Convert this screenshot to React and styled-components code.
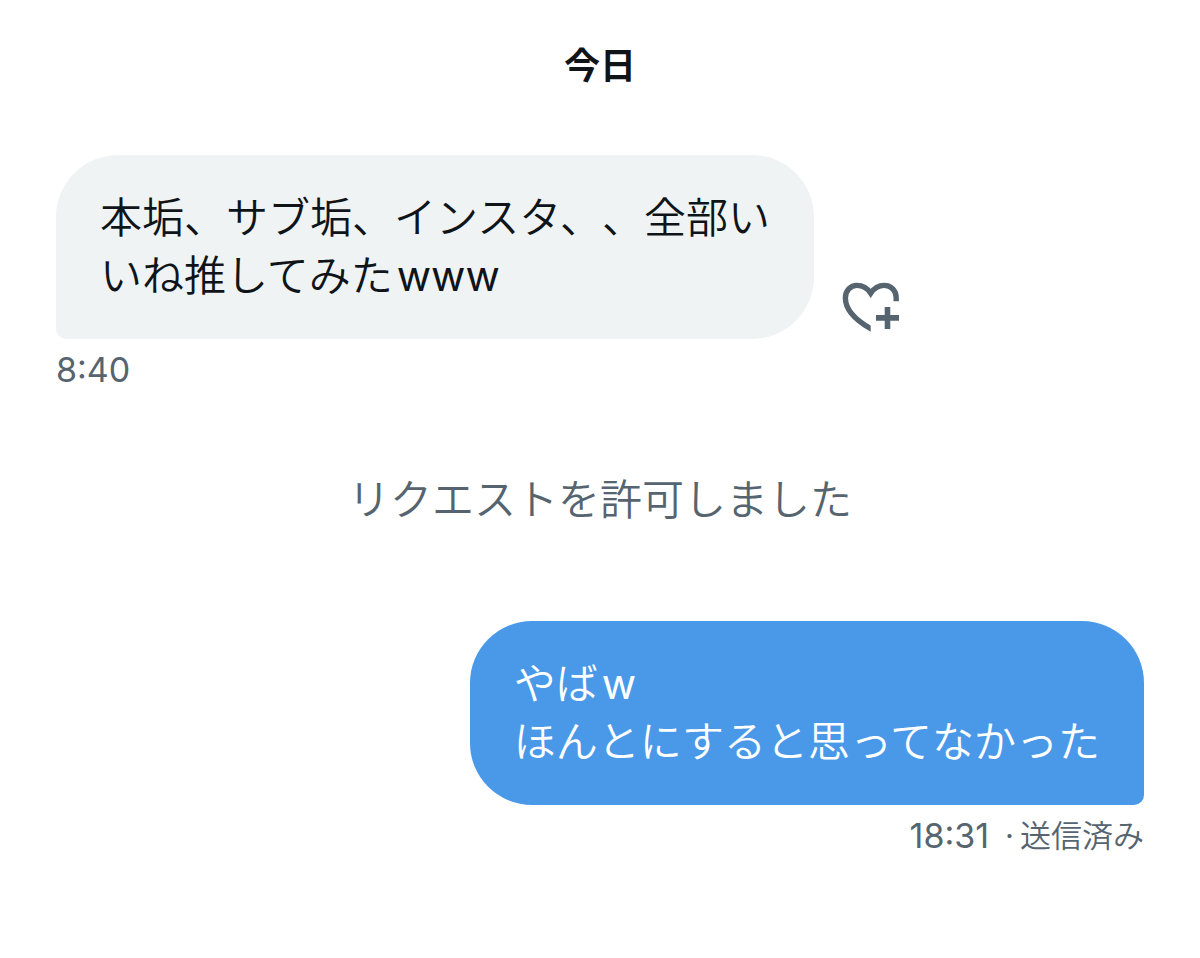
import React, { useState } from 'react';
import styled, { createGlobalStyle, css, ThemeProvider } from 'styled-components';

const theme = {
  colors: {
    background: '#ffffff',
    text: '#0f1419',
    textSecondary: '#566470',
    received: '#eff3f4',
    sent: '#4a99e9',
    onSent: '#ffffff',
  },
  fonts: {
    base: "Inter, 'Noto Sans CJK JP', sans-serif",
  },
};

const GlobalStyle = createGlobalStyle`
  * {
    box-sizing: border-box;
  }

  body {
    margin: 0;
    background: ${({ theme }) => theme.colors.background};
    color: ${({ theme }) => theme.colors.text};
    font-family: ${({ theme }) => theme.fonts.base};
    text-spacing-trim: space-all;
  }
`;

const Conversation = styled.main`
  display: flex;
  flex-direction: column;
  padding: 46px 56px;
`;

const DateHeading = styled.h1`
  margin: 0 0 69px;
  font-size: 36px;
  font-weight: 700;
  line-height: 40px;
  text-align: center;
`;

const Message = styled.article`
  display: flex;
  flex-direction: column;
  align-items: ${({ $sent }) => ($sent ? 'flex-end' : 'flex-start')};
`;

const BubbleRow = styled.div`
  display: flex;
  align-items: flex-end;
  gap: 28px;
`;

const Bubble = styled.p`
  margin: 0;
  max-width: 760px;
  padding: 34px 44px;
  border-radius: 62px;
  font-size: 42px;
  font-weight: 350;
  line-height: 58px;

  ${({ $sent, theme }) =>
    $sent
      ? css`
          background: ${theme.colors.sent};
          color: ${theme.colors.onSent};
          border-bottom-right-radius: 10px;
        `
      : css`
          background: ${theme.colors.received};
          color: ${theme.colors.text};
          border-bottom-left-radius: 10px;
        `}
`;

const Latin = styled.span`
  margin-left: 4px;
  font-weight: 400;
`;

const ReactionButton = styled.button`
  display: flex;
  margin: 0 0 6px;
  padding: 0;
  border: 0;
  background: none;
  color: ${({ theme }) => theme.colors.textSecondary};
  cursor: pointer;
`;

const Meta = styled.div`
  display: flex;
  align-items: center;
  gap: 16px;
  margin-top: 11px;
  color: ${({ theme }) => theme.colors.textSecondary};
  font-size: 34px;
  line-height: 40px;
`;

const DeliveryState = styled.span`
  font-size: 31px;
  font-weight: 350;
`;

const Separator = styled.span`
  margin-right: 6px;
  font-weight: 400;
`;

const Notice = styled.p`
  margin: 81px 0 92px;
  color: ${({ theme }) => theme.colors.textSecondary};
  font-size: 42px;
  font-weight: 350;
  line-height: 58px;
  text-align: center;
`;

const HeartPlusIcon = () => (
  <svg width="58" height="52" viewBox="0 0 58 52" fill="none" aria-hidden="true">
    <clipPath id="heart-cut">
      <path d="M0 0H58V24H28.7V52H0Z" />
    </clipPath>
    <path
      clipPath="url(#heart-cut)"
      d="M54.2 20.3V17C54.2 9.5 49 4.4 42.3 4.4C37 4.4 32.5 6.5 28.7 12.2C24.9 6.5 20.4 4.4 15 4.4C8.5 4.4 3.4 9.5 3.4 17C3.4 27.5 12.5 38.5 28.7 47.7L33 50"
      stroke="currentColor"
      strokeWidth="5.4"
    />
    <path d="M34 36.9H57M45.5 26V48" stroke="currentColor" strokeWidth="5.6" />
  </svg>
);

const App = () => {
  const [liked, setLiked] = useState(false);

  return (
    <ThemeProvider theme={theme}>
      <GlobalStyle />
      <Conversation>
        <DateHeading>今日</DateHeading>

        <Message>
          <BubbleRow>
            <Bubble>
              本垢、サブ垢、インスタ、、全部い
              <br />
              いね推してみた<Latin>www</Latin>
            </Bubble>
            <ReactionButton
              type="button"
              aria-label="リアクションを追加"
              aria-pressed={liked}
              onClick={() => setLiked(!liked)}
            >
              <HeartPlusIcon />
            </ReactionButton>
          </BubbleRow>
          <Meta>
            <time dateTime="08:40">8:40</time>
          </Meta>
        </Message>

        <Notice>リクエストを許可しました</Notice>

        <Message $sent>
          <BubbleRow>
            <Bubble $sent>
              やば<Latin>w</Latin>
              <br />
              ほんとにすると思ってなかった
            </Bubble>
          </BubbleRow>
          <Meta>
            <time dateTime="18:31">18:31</time>
            <DeliveryState>
              <Separator>·</Separator>送信済み
            </DeliveryState>
          </Meta>
        </Message>
      </Conversation>
    </ThemeProvider>
  );
};

export default App;
